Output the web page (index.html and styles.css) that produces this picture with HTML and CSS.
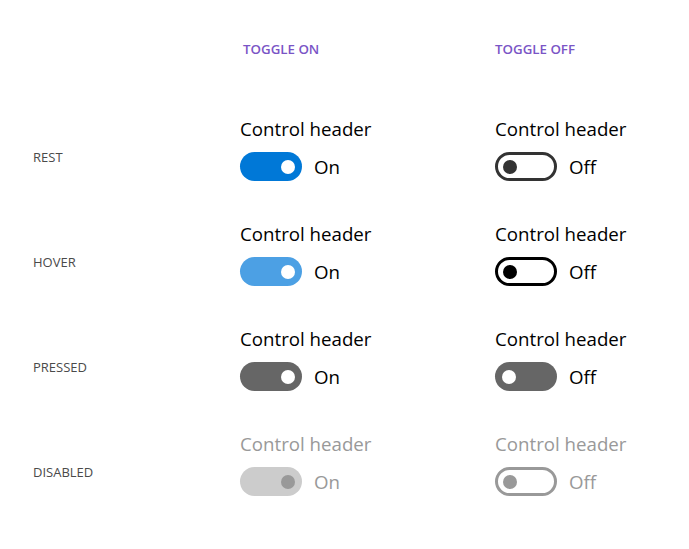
FILE: index.html
```html
<!DOCTYPE html>
<html>
<head>
<meta charset="utf-8">
<link rel="stylesheet" href="styles.css">
</head>
<body>
<div class="page">
  <div class="grid">
    <div class="colhead-spacer"></div>
    <div class="colhead first">TOGGLE ON</div>
    <div class="colhead">TOGGLE OFF</div>

    <div class="rowlabel">REST</div>
    <div class="cell">
      <div class="hdr">Control header</div>
      <div class="line"><span class="tg on rest"><span class="knob"></span></span><span class="state">On</span></div>
    </div>
    <div class="cell">
      <div class="hdr">Control header</div>
      <div class="line"><span class="tg off rest"><span class="knob"></span></span><span class="state">Off</span></div>
    </div>

    <div class="rowlabel">HOVER</div>
    <div class="cell">
      <div class="hdr">Control header</div>
      <div class="line"><span class="tg on hover"><span class="knob"></span></span><span class="state">On</span></div>
    </div>
    <div class="cell">
      <div class="hdr">Control header</div>
      <div class="line"><span class="tg off hover"><span class="knob"></span></span><span class="state">Off</span></div>
    </div>

    <div class="rowlabel">PRESSED</div>
    <div class="cell">
      <div class="hdr">Control header</div>
      <div class="line"><span class="tg on pressed"><span class="knob"></span></span><span class="state">On</span></div>
    </div>
    <div class="cell">
      <div class="hdr">Control header</div>
      <div class="line"><span class="tg off pressed"><span class="knob"></span></span><span class="state">Off</span></div>
    </div>

    <div class="rowlabel">DISABLED</div>
    <div class="cell disabled">
      <div class="hdr">Control header</div>
      <div class="line"><span class="tg on dis"><span class="knob"></span></span><span class="state">On</span></div>
    </div>
    <div class="cell disabled">
      <div class="hdr">Control header</div>
      <div class="line"><span class="tg off dis"><span class="knob"></span></span><span class="state">Off</span></div>
    </div>
  </div>
</div>
</body>
</html>
```

FILE: styles.css
```css
html, body {
  margin: 0;
  padding: 0;
  background: #ffffff;
}
body {
  font-family: "Open Sans", "Noto Sans", sans-serif;
  color: #000;
}
.page {
  width: 689px;
  height: 549px;
  padding: 40px 0 0 33px;
  box-sizing: border-box;
}
.grid {
  display: grid;
  grid-template-columns: 207px 255px 1fr;
  grid-template-rows: 18px repeat(4, 105px);
}
.colhead {
  font-size: 13.3px;
  font-weight: 600;
  color: #7a55c6;
  line-height: 18px;
}
.colhead.first { padding-left: 3px; }
.rowlabel {
  font-size: 13px;
  color: #4a4a4a;
  font-weight: 400;
  padding-top: 91px;
  line-height: 16px;
}
.cell {
  padding-top: 60px;
}
.hdr {
  font-size: 18.7px;
  line-height: 22px;
  color: #000;
}
.line {
  display: flex;
  align-items: center;
  margin-top: 12px;
  height: 29px;
}
.state {
  font-size: 18.7px;
  margin-left: 12px;
  line-height: 22px;
}
.tg {
  position: relative;
  display: block;
  width: 62px;
  height: 29px;
  border-radius: 15px;
  box-sizing: border-box;
  flex: none;
}
.tg .knob {
  position: absolute;
  top: 50%;
  width: 14px;
  height: 14px;
  border-radius: 50%;
  transform: translateY(-50%);
}
.tg.on .knob { right: 7px; background: #fff; }
.tg.off .knob { left: 7px; }

.tg.on.rest { background: #0078d7; }
.tg.on.hover { background: #4ca0e4; }
.tg.on.pressed { background: #666666; }
.tg.on.dis { background: #cccccc; }
.tg.on.dis .knob { background: #999999; }

.tg.off.rest { border: 3px solid #333333; }
.tg.off.rest .knob { background: #333333; left: 5px; }
.tg.off.hover { border: 3px solid #000000; }
.tg.off.hover .knob { background: #000000; left: 5px; }
.tg.off.pressed { background: #666666; }
.tg.off.pressed .knob { background: #ffffff; }
.tg.off.dis { border: 3px solid #999999; }
.tg.off.dis .knob { background: #999999; left: 5px; }

.disabled .hdr, .disabled .state { color: #999999; }
```
